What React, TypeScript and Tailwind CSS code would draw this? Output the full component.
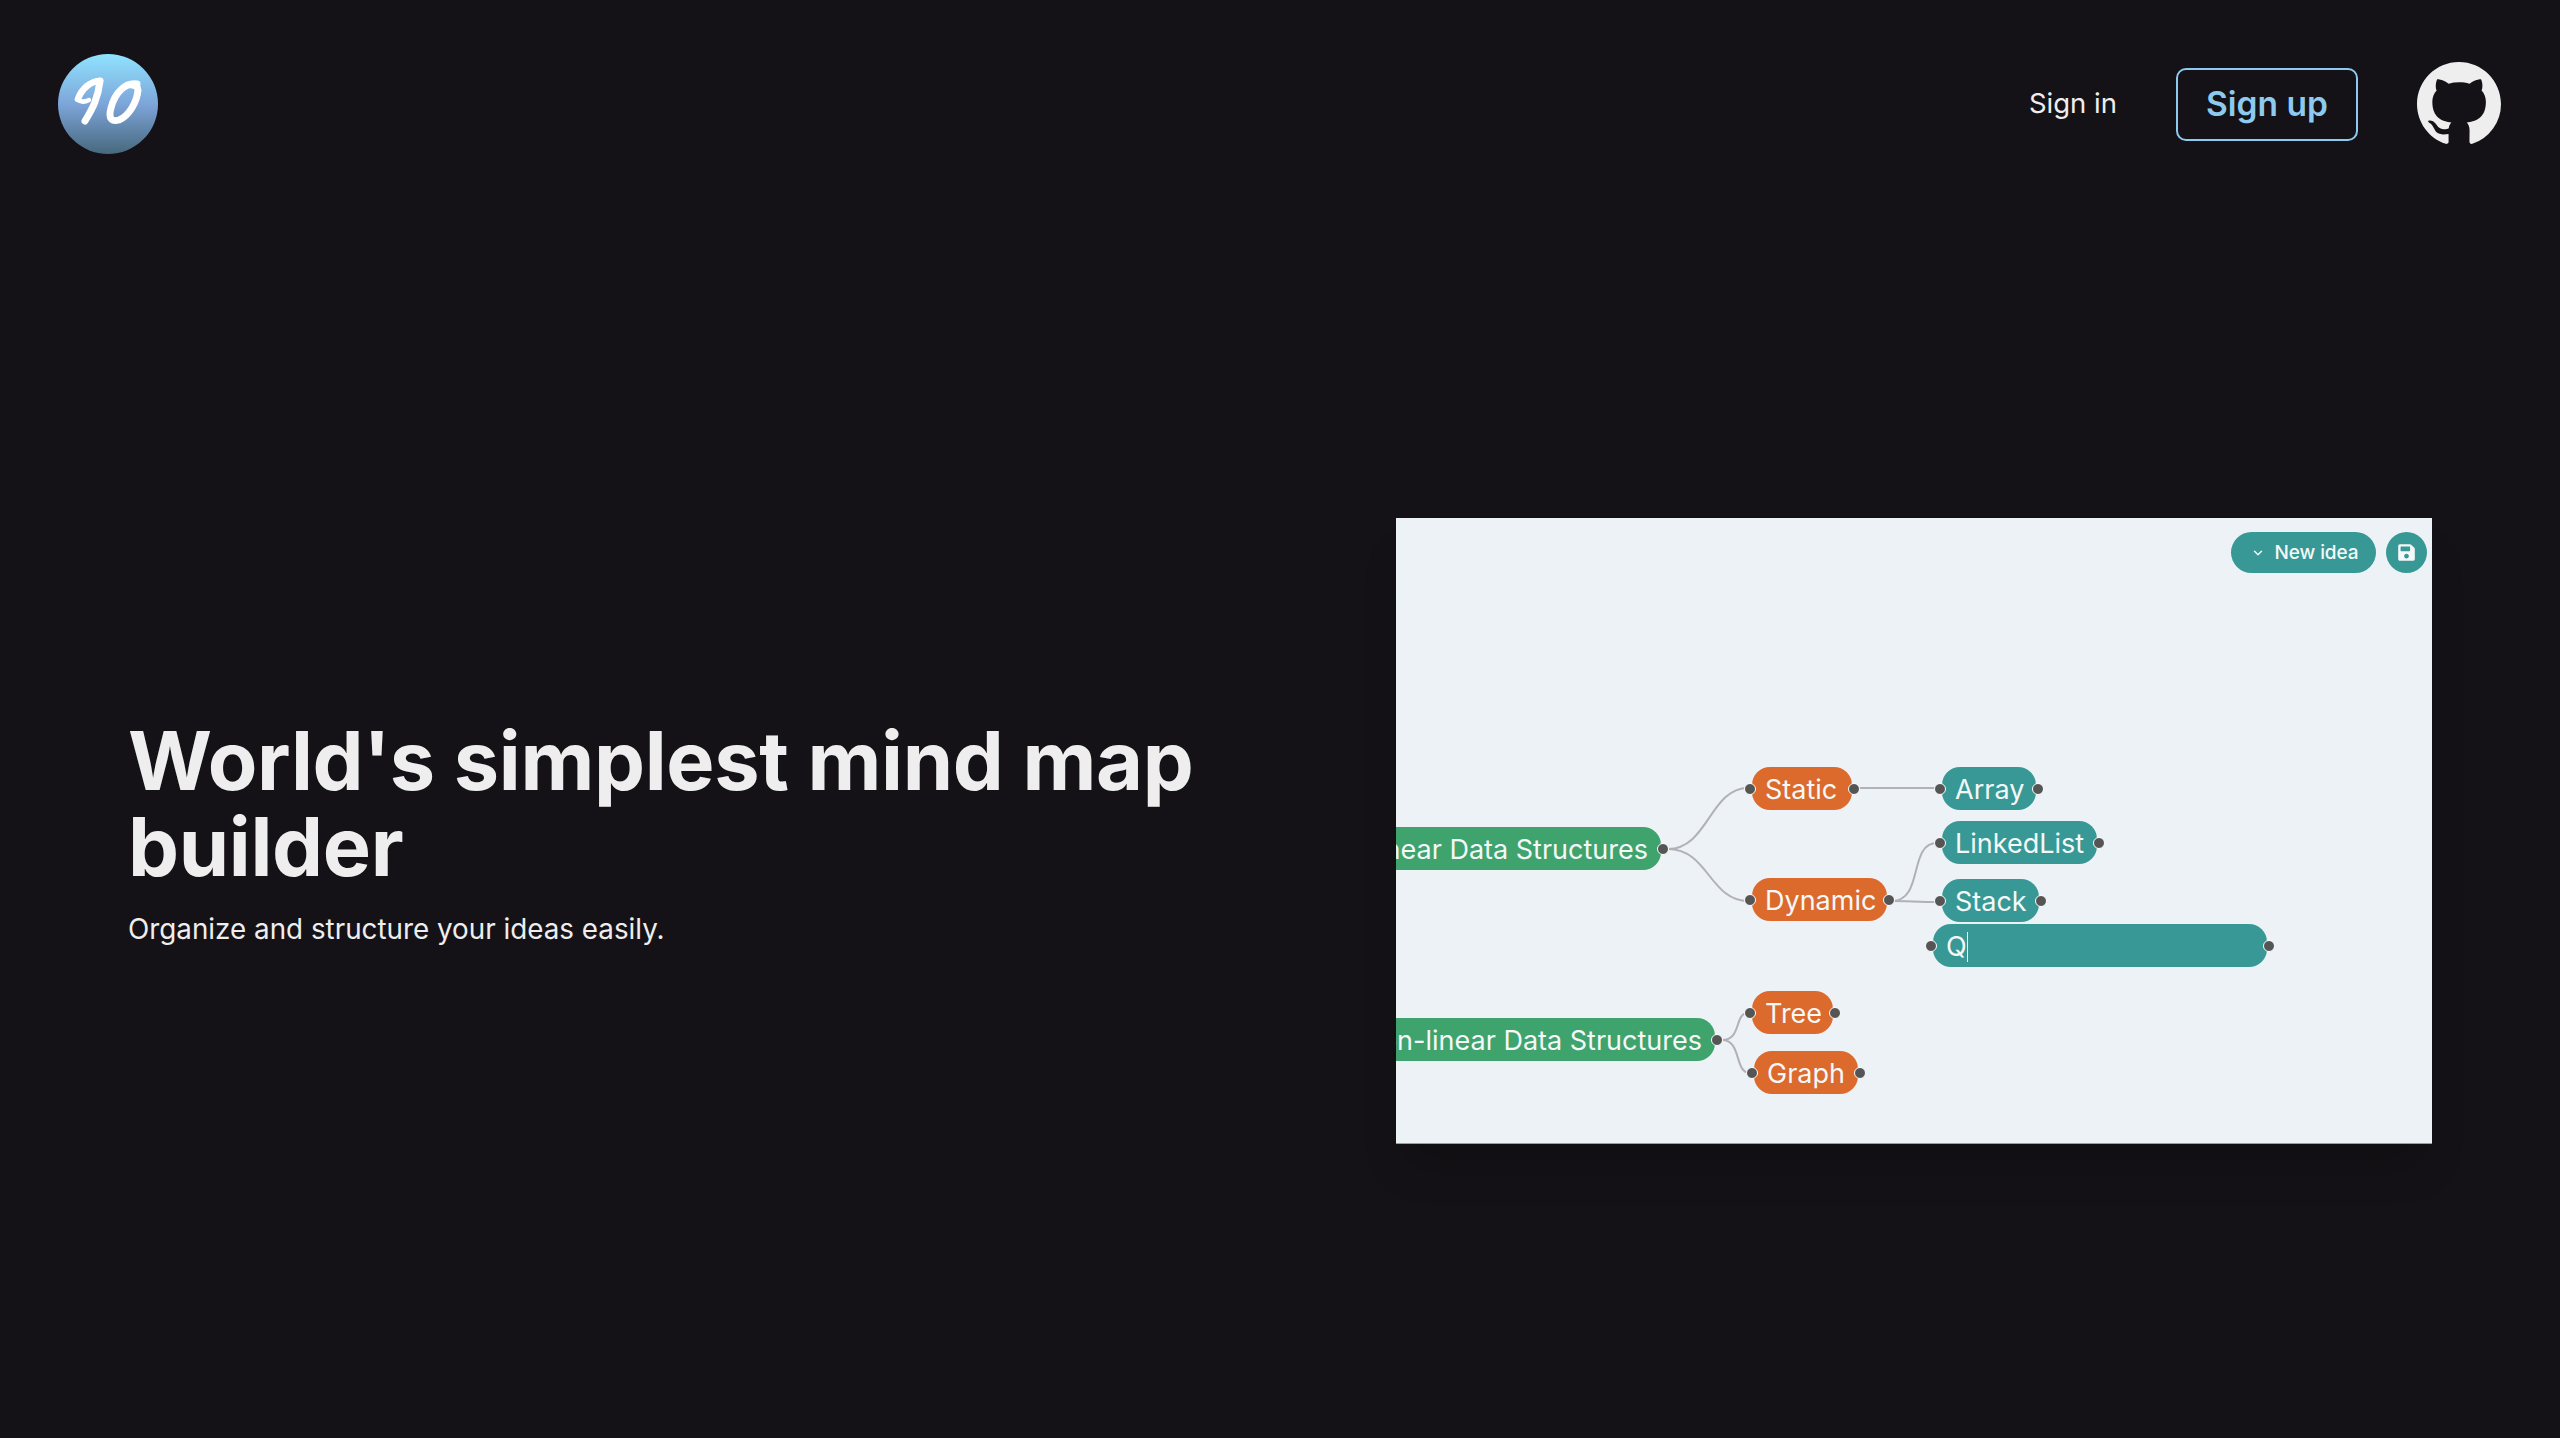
import { ChevronDown } from 'lucide-react';
import { FaSave } from 'react-icons/fa';

const inter = "font-['Inter','Noto_Sans',sans-serif]";

interface IdeaNodeProps {
    label: string;
    className: string;
    /** Root nodes have no incoming handle */
    root?: boolean;
}

const handleCls = 'absolute top-1/2 -translate-y-1/2 w-[12px] h-[12px] rounded-full bg-[#555] border-[1.5px] border-white';

const IdeaNode: React.FC<IdeaNodeProps> = ({ label, className, root }) => (
    <div className={`absolute h-[43px] rounded-[18px] flex items-center pt-[2px] text-[27px] leading-none text-[#f4f8f8] whitespace-nowrap ${className}`}>
        {!root && <span className={`${handleCls} -left-[8px]`} />}
        {label}
        <span className={`${handleCls} -right-[8px]`} />
    </div>
);

const MindMapPreview = () => (
    <div className="relative w-[1036px] h-[626px] shrink-0 overflow-hidden bg-[#edf2f7] border-b border-[#9a9da3] shadow-[0_30px_40px_-10px_rgba(0,0,0,0.2)]">
        {/* Edges */}
        <svg className="absolute inset-0" width="1036" height="626" viewBox="0 0 1036 626" fill="none" stroke="#b1b1b7" strokeWidth="2">
            <path d="M272 331 C 312 331, 314 270, 352 270" />
            <path d="M272 331 C 312 331, 314 383, 352 383" />
            <path d="M460 270 L 541 270" />
            <path d="M496 383 C 528 383, 512 325, 541 325" />
            <path d="M496 383 C 510 383, 525 384, 541 384" />
            <path d="M326 522 C 346 522, 338 495, 352 495" />
            <path d="M326 522 C 346 522, 338 555, 354 555" />
        </svg>

        {/* Toolbar */}
        <div className="absolute top-[14px] right-[5px] flex items-center gap-[10px]">
            <div className="h-[41px] w-[145px] pt-[1px] pl-[2px] rounded-full bg-[#389895] text-[#f4f8f8] flex items-center justify-center gap-[10px] text-[19px] font-medium tracking-[-0.1px]">
                <ChevronDown className="w-[14px] h-[14px]" strokeWidth={2.5} />
                New idea
            </div>
            <div className="h-[41px] w-[41px] rounded-full bg-[#389895] text-[#f4f8f8] flex items-center justify-center">
                <FaSave className="w-[19px] h-[19px]" />
            </div>
        </div>

        {/* Nodes */}
        <IdeaNode root label="Linear Data Structures" className="right-[771px] top-[309px] px-[13px] bg-[#3fa36e]" />
        <IdeaNode root label="Non-linear Data Structures" className="right-[717px] top-[500px] px-[13px] bg-[#3fa36e]" />
        <IdeaNode label="Static" className="left-[356px] top-[249px] w-[100px] pl-[13px] bg-[#db6a2c]" />
        <IdeaNode label="Dynamic" className="left-[356px] top-[360px] w-[135px] pl-[13px] bg-[#db6a2c]" />
        <IdeaNode label="Tree" className="left-[356px] top-[473px] w-[81px] pl-[13px] bg-[#db6a2c]" />
        <IdeaNode label="Graph" className="left-[358px] top-[533px] w-[104px] pl-[13px] bg-[#db6a2c]" />
        <IdeaNode label="Array" className="left-[546px] top-[249px] w-[94px] pl-[13px] bg-[#389895]" />
        <IdeaNode label="LinkedList" className="left-[546px] top-[303px] w-[155px] pl-[13px] bg-[#389895]" />
        <IdeaNode label="Stack" className="left-[546px] top-[361px] w-[97px] pl-[13px] bg-[#389895]" />
        <div className="absolute left-[537px] top-[406px] w-[334px] h-[43px] rounded-[18px] bg-[#389895] flex items-center pl-[13px] pt-[2px] text-[27px] leading-none text-[#f4f8f8]">
            <span className={`${handleCls} -left-[8px]`} />
            Q<span className="w-px h-[30px] bg-[#f4f8f8]" />
            <span className={`${handleCls} -right-[8px]`} />
        </div>
    </div>
);

export default function App() {
    return (
        <div className={`h-[1438px] flex flex-col bg-[#141216] text-[#eeeeee] ${inter}`}>
            <header className="h-[224px] shrink-0 flex items-start justify-between pt-[54px] pl-[58px] pr-[59px]">
                {/* Logo */}
                <svg width="100" height="100" viewBox="0 0 100 100" aria-label="IO logo">
                    <defs>
                        <linearGradient id="logoFill" x1="0" y1="0" x2="0" y2="1">
                            <stop offset="0" stopColor="#8fe3ff" />
                            <stop offset="0.5" stopColor="#7da5d9" />
                            <stop offset="1" stopColor="#47687d" />
                        </linearGradient>
                    </defs>
                    <circle cx="50" cy="50" r="50" fill="url(#logoFill)" />
                    <g fill="none" stroke="#ffffff" strokeLinecap="round" strokeLinejoin="round">
                        <path d="M20 45 C 24 34, 33 27, 42 27" strokeWidth="6.5" />
                        <path d="M19 45 C 23 49, 27 48, 31 46" strokeWidth="4.5" />
                        <path d="M42 27 C 40 44, 35 54, 27 67" strokeWidth="7" />
                        <path d="M79 30 C 68 28, 57 38, 53 54 C 50 65, 54 68, 61 66 C 71 62, 79 48, 80 36 C 80 33, 78 31, 74 31" strokeWidth="7" />
                    </g>
                </svg>

                <nav className="flex items-center gap-[59px] h-[84px] mt-[8px]">
                    <a className="text-[27.5px] leading-none text-[#eeeeee]">Sign in</a>
                    <a className="w-[182px] h-[73px] flex items-center justify-center rounded-[10px] border-2 border-[#8ccaf0] text-[33.5px] font-semibold text-[#8ccaf0]">
                        Sign up
                    </a>
                    <svg className="w-[84px] h-[84px] fill-[#eeeeee]" viewBox="0 0 16 16" aria-label="GitHub">
                        <path d="M8 0C3.58 0 0 3.58 0 8c0 3.54 2.29 6.53 5.47 7.59.4.07.55-.17.55-.38 0-.19-.01-.82-.01-1.49-2.01.37-2.53-.49-2.69-.94-.09-.23-.48-.94-.82-1.13-.28-.15-.68-.52-.01-.53.63-.01 1.08.58 1.23.82.72 1.21 1.87.87 2.33.66.07-.52.28-.87.51-1.07-1.78-.2-3.64-.89-3.64-3.95 0-.87.31-1.59.82-2.15-.08-.2-.36-1.02.08-2.12 0 0 .67-.21 2.2.82.64-.18 1.32-.27 2-.27.68 0 1.36.09 2 .27 1.53-1.04 2.2-.82 2.2-.82.44 1.1.16 1.92.08 2.12.51.56.82 1.27.82 2.15 0 3.07-1.87 3.75-3.65 3.95.29.25.54.73.54 1.48 0 1.07-.01 1.93-.01 2.2 0 .21.15.46.55.38A8.013 8.013 0 0016 8c0-4.42-3.58-8-8-8z" />
                    </svg>
                </nav>
            </header>

            <main className="flex-1 flex items-center justify-between pl-[128px] pr-[128px]">
                <div className="w-[1120px] pt-[5px]">
                    <h1 className="text-[81px] leading-[86px] font-bold tracking-[-0.004em] text-[#eeeeee]">
                        World's simplest mind map builder
                    </h1>
                    <p className="mt-[19px] text-[27.8px] leading-[40px] text-[#eeeeee]">
                        Organize and structure your ideas easily.
                    </p>
                </div>
                <MindMapPreview />
            </main>
        </div>
    );
}
